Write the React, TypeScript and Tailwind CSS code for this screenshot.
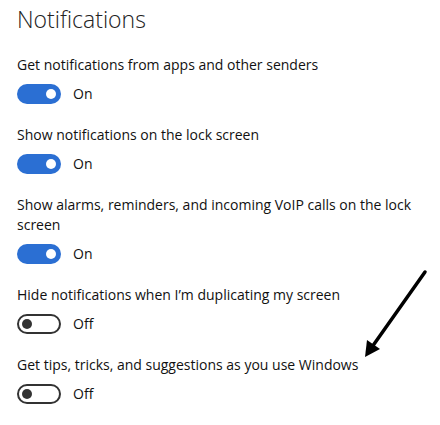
import React from "react";

function Toggle({ on }: { on: boolean }) {
  return (
    <div className="flex items-center gap-3">
      {on ? (
        <div className="relative w-[44px] h-[20px] rounded-full bg-[#2b6fd3]">
          <div className="absolute right-[5px] top-[5px] w-[10px] h-[10px] rounded-full bg-white" />
        </div>
      ) : (
        <div className="relative w-[44px] h-[20px] rounded-full border-2 border-[#333333] bg-white">
          <div className="absolute left-[3px] top-[3px] w-[10px] h-[10px] rounded-full bg-[#333333]" />
        </div>
      )}
      <span className="text-[14px] leading-5 text-[#111111]">{on ? "On" : "Off"}</span>
    </div>
  );
}

function Setting({ label, on }: { label: string; on: boolean }) {
  return (
    <div className="flex flex-col gap-[9px]">
      <p className="text-[14px] leading-5 text-[#111111] pr-2">{label}</p>
      <Toggle on={on} />
    </div>
  );
}

export default function App() {
  return (
    <div
      className="relative w-[440px] h-[425px] bg-white overflow-hidden pl-[17px]"
      style={{ fontFamily: '"Open Sans", "Noto Sans", sans-serif' }}
    >
      <h1 className="text-[23px] leading-[30px] font-light text-[#222222] pt-[4px]">Notifications</h1>
      <div className="flex flex-col gap-[21px] mt-[21px]">
        <Setting label="Get notifications from apps and other senders" on />
        <Setting label="Show notifications on the lock screen" on />
        <Setting label="Show alarms, reminders, and incoming VoIP calls on the lock screen" on />
        <Setting label="Hide notifications when I’m duplicating my screen" on={false} />
        <Setting label="Get tips, tricks, and suggestions as you use Windows" on={false} />
      </div>
      <svg className="absolute left-0 top-0 pointer-events-none" width="440" height="425" viewBox="0 0 440 425">
        <line x1="425" y1="272" x2="372" y2="347" stroke="#000" strokeWidth="3.5" strokeLinecap="round" />
        <polygon points="365,357 367,340 380,349" fill="#000" />
      </svg>
    </div>
  );
}
